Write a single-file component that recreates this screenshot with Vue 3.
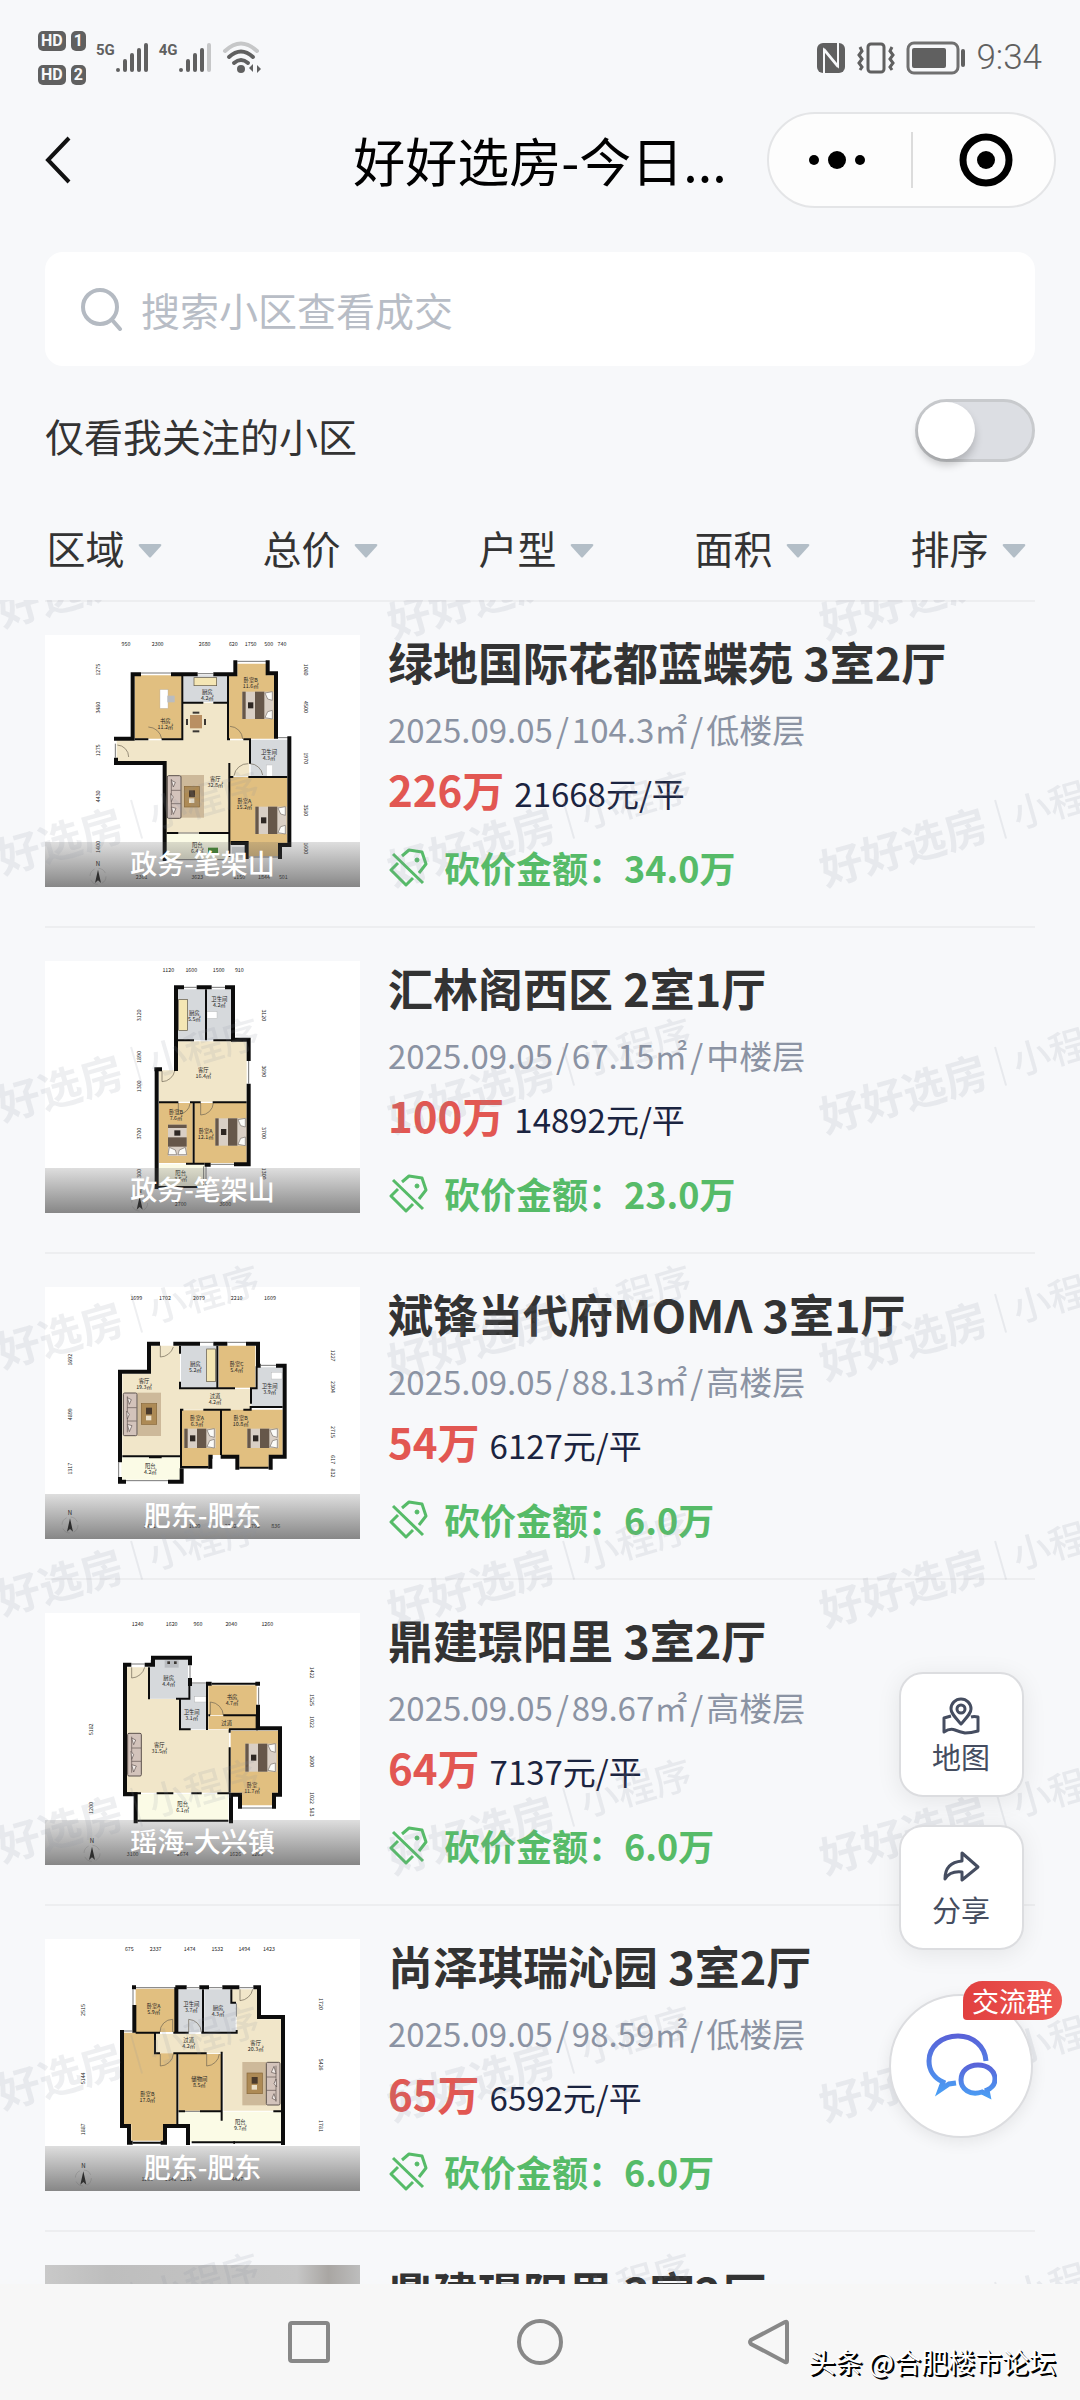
<script setup>
import { ref } from 'vue'

const keyword = ref('')
const onlyFollowed = ref(false)
const filters = ['区域', '总价', '户型', '面积', '排序']

const listings = [
  { id: 1, name: '绿地国际花都蓝蝶苑', layout: '3室2厅', area: '104.3', floor: '低楼层', total: '226', unit: '21668', cut: '34.0', district: '政务-笔架山', plan: 0 },
  { id: 2, name: '汇林阁西区', layout: '2室1厅', area: '67.15', floor: '中楼层', total: '100', unit: '14892', cut: '23.0', district: '政务-笔架山', plan: 1 },
  { id: 3, name: '斌锋当代府MOMΛ', layout: '3室1厅', area: '88.13', floor: '高楼层', total: '54', unit: '6127', cut: '6.0', district: '肥东-肥东', plan: 2 },
  { id: 4, name: '鼎建璟阳里', layout: '3室2厅', area: '89.67', floor: '高楼层', total: '64', unit: '7137', cut: '6.0', district: '瑶海-大兴镇', plan: 3 },
  { id: 5, name: '尚泽琪瑞沁园', layout: '3室2厅', area: '98.59', floor: '低楼层', total: '65', unit: '6592', cut: '6.0', district: '肥东-肥东', plan: 4 },
  { id: 6, name: '鼎建璟阳里', layout: '3室2厅', area: '89.67', floor: '高楼层', total: '64', unit: '7137', cut: '6.0', district: '瑶海-大兴镇', plan: null },
]

// floor plans: filled rooms, thick outer walls, thin inner walls, door arcs, furniture and labels
const plans = [
  {
    box: '45 44 945 756',
    rooms: [
      ['hall', 'M460 247H592V360H658V468H597V640H408V428H260V360H460Z'],
      ['wood', 'M314 165H457V355H314Z'],
      ['wood', 'M597 165H622V130H712V165H733V355H597Z'],
      ['wood', 'M600 470H772V672H748V708H655V672H600Z'],
      ['tile', 'M460 165H592V245H460Z'],
      ['tile', 'M662 358H774V468H662Z'],
      ['tile', 'M606 680H648V712H606Z'],
      ['deck', 'M408 640H598V716H408Z'],
    ],
    thick: 'M252 355H314M308 355V162H333M423 162H503M550 162H616V120M713 120V159H738V355M778 348V674H750V716M258 412V428H404V722M602 668H650V716',
    thin: 'M314 357H355M395 357H457V165M457 247H520M550 247H592M594 165V357H600M640 357H660V430M600 470H610M655 470H772M598 428V710M410 638H445M507 638H595',
    lines: 'M333 158H423M503 160H550M622 123H712M742 352H774M256 370V412M415 718H590M655 710H748M445 638H507',
    doors: 'M355 320A42 42 0 0 1 395 355M262 374A36 36 0 0 1 296 410M600 318A40 40 0 0 1 638 356M612 466A42 42 0 0 1 655 430M660 430A40 40 0 0 1 698 464',
    beds: [[637, 214, 0, 82], [676, 559, 0, 82]],
    sofas: [[412, 466, 0]],
    rugs: [[452, 464, 70, 128]],
    tables: [[463, 498]],
    extras: [['white', 390, 208, 24, 56], ['grey', 412, 226, 22, 20], ['cream', 492, 172, 68, 24], ['white', 709, 434, 19, 34], ['brown', 480, 284, 36, 40], ['dark', 488, 274, 20, 6], ['dark', 488, 330, 20, 6], ['dark', 468, 296, 6, 18], ['dark', 522, 296, 6, 18], ['green', 534, 682, 30, 18]],
    labels: [['书房', 406, 303], ['11.2㎡', 406, 321], ['厨房', 532, 216], ['4.2㎡', 532, 234], ['卧室B', 662, 180], ['11.6㎡', 662, 198], ['客厅', 556, 476], ['32.8㎡', 556, 494], ['卫生间', 717, 394], ['4.3㎡', 717, 412], ['卧室A', 643, 542], ['15.2㎡', 643, 560], ['阳台', 502, 674], ['6.4㎡', 502, 692]],
    top: [['950', 288], ['2300', 383], ['2680', 524], ['620', 610], ['1750', 662], ['500', 716], ['740', 756]],
    topY: 72,
    bottom: [['2361', 335], ['3623', 502], ['1150', 628], ['1844', 702], ['501', 760]],
    bottomY: 770,
    left: [['1275', 148], ['3480', 262], ['1275', 390], ['4430', 528], ['1400', 680]],
    leftX: 203,
    right: [['1080', 148], ['4500', 260], ['1970', 414], ['3580', 570], ['1600', 684]],
    rightX: 829,
    north: [204, 768],
  },
  {
    box: '45 62 945 756',
    rooms: [
      ['tile', 'M443 147H525V300H443Z'],
      ['tile', 'M531 147H605V300H531Z'],
      ['hall', 'M443 303H650V484H387V390H443Z'],
      ['wood', 'M387 488H488V668H387Z'],
      ['wood', 'M493 488H650V668H493Z'],
      ['deck', 'M387 672H524V738H387Z'],
    ],
    thick: 'M462 141H438V392M500 141H545M585 141H609V298H656V362M656 430V672H612M373 387H396M380 387V746M524 673H542',
    thin: 'M528 147V300M443 300H492M550 300H605M387 486H445M480 486H512M548 486H650M491 486V668M468 670H524M380 740H524',
    lines: 'M462 141H500M545 141H585M656 362V430M542 672H612M521 678V740M528 678V740',
    doors: 'M396 392V424A40 40 0 0 0 434 392M445 488V522A36 36 0 0 0 480 490M512 488V524A38 38 0 0 0 550 488',
    beds: [[556, 534, 0, 82], [470, 553, 90, 56]],
    sofas: [],
    rugs: [],
    tables: [],
    extras: [['cream', 446, 178, 26, 92], ['white', 531, 214, 30, 20]],
    labels: [['厨房', 493, 218], ['5.5㎡', 493, 236], ['卫生间', 568, 176], ['4.2㎡', 568, 194], ['客厅', 520, 390], ['16.4㎡', 520, 408], ['卧室B', 438, 515], ['7.6㎡', 438, 533], ['卧室A', 527, 573], ['12.1㎡', 527, 591], ['阳台', 452, 698], ['3.5㎡', 452, 716]],
    top: [['1120', 415], ['1600', 484], ['1500', 566], ['910', 628]],
    topY: 90,
    bottom: [['2700', 452], ['3600', 586]],
    bottomY: 790,
    left: [['3120', 225], ['1890', 350], ['1300', 438], ['3700', 580], ['1300', 704]],
    leftX: 328,
    right: [['3120', 225], ['3690', 393], ['3700', 578], ['1300', 700]],
    rightX: 703,
    north: [329, 788],
  },
  {
    box: '45 52 945 756',
    rooms: [
      ['hall', 'M362 228H450V358H662V420H450V558H277V312H362Z'],
      ['tile', 'M453 228H560V352H453Z'],
      ['wood', 'M566 228H676V354H566Z'],
      ['tile', 'M684 293H758V410H664V358H684Z'],
      ['wood', 'M456 422H570V556H536V590H456Z'],
      ['wood', 'M576 420H758V556H716V592H628V556H576Z'],
      ['deck', 'M274 563H452V630H274Z'],
    ],
    thick: 'M390 222H357V306H270V578M430 222H510M550 222H592M648 222H684V288H692M738 288H764V561H722V600M622 600V561H572M548 561H541V597M270 622V636H288M414 636H455V596',
    thin: 'M450 228V252M450 336V356H615M562 228V354M660 356H680V290M663 356V402M450 420H460M520 420H602M640 420H662V412H758M453 420V596M573 420V556M277 560H315M357 563H395M277 560H452M455 592H536M628 594H716',
    lines: 'M510 218H550M592 218H648M692 287H738M266 578V622M288 633H414M460 596H540',
    doors: 'M391 228V262A42 42 0 0 0 430 232',
    beds: [[463, 477, 0, 58], [652, 477, 0, 58]],
    sofas: [[280, 370, 0]],
    rugs: [[322, 369, 71, 130]],
    tables: [[334, 402]],
    extras: [['cream', 530, 238, 26, 98], ['white', 724, 308, 32, 20]],
    labels: [['客厅', 342, 334], ['19.3㎡', 342, 352], ['厨房', 496, 282], ['5.2㎡', 496, 300], ['卧室C', 620, 282], ['5.4㎡', 620, 300], ['过道', 555, 379], ['4.2㎡', 555, 397], ['卫生间', 719, 350], ['3.9㎡', 719, 368], ['卧室A', 501, 444], ['6.3㎡', 501, 462], ['卧室B', 632, 444], ['10.8㎡', 632, 462], ['阳台', 361, 588], ['4.2㎡', 361, 606]],
    top: [['1699', 319], ['1702', 405], ['2079', 507], ['2210', 620], ['1609', 720]],
    topY: 85,
    bottom: [['3401', 360], ['1609', 494], ['2202', 602], ['1792', 672], ['836', 737]],
    bottomY: 769,
    left: [['1692', 270], ['4899', 434], ['1317', 597]],
    leftX: 119,
    right: [['1227', 258], ['2304', 352], ['2715', 487], ['617', 570], ['832', 610]],
    rightX: 910,
    north: [120, 766],
  },
  {
    box: '45 67 945 756',
    rooms: [
      ['hall', 'M291 230H357V324H450V418H597V606H291Z'],
      ['tile', 'M360 208H474V324H360Z'],
      ['tile', 'M453 326H480V280H530V416H453Z'],
      ['wood', 'M535 284H680V374H535Z'],
      ['wood', 'M535 376H678V416H535Z'],
      ['wood', 'M602 420H744V606H726V644H636V606H602Z'],
      ['deck', 'M322 610H595V688H322Z'],
    ],
    thick: 'M304 222H285V611H317V698M344 222H369V201H480V224M480 262V280H486M684 342V413H750V612H732V654M603 698V612H630V654M528 279H545M676 279H690',
    thin: 'M357 230V326M438 324H450V416H482M450 324H478V280M531 280V418M535 374H540M580 374H680V416M597 416H684M599 416V426M599 470V606M291 608H333M380 608H430M484 608H515M562 608H597M322 690H595M545 279H680',
    lines: 'M304 220H344M480 224V262M486 277H528M686 290V342M636 652H726',
    doors: 'M305 230V262A42 42 0 0 0 344 230M541 374V334A42 42 0 0 1 580 374',
    beds: [[646, 459, 0, 84]],
    sofas: [[293, 428, 0]],
    rugs: [],
    tables: [],
    extras: [['grey', 404, 209, 42, 22], ['dark', 412, 212, 8, 8], ['dark', 432, 212, 8, 8], ['white', 494, 318, 34, 16]],
    labels: [['厨房', 416, 262], ['4.4㎡', 416, 280], ['书房', 606, 320], ['4.7㎡', 606, 338], ['过道', 590, 398], ['卫生间', 485, 363], ['3.1㎡', 485, 381], ['客厅', 388, 462], ['31.5㎡', 388, 480], ['卧室', 666, 583], ['11.7㎡', 666, 601], ['阳台', 458, 641], ['6.1㎡', 458, 659]],
    top: [['1240', 323], ['1620', 425], ['960', 504], ['2040', 604], ['1260', 712]],
    topY: 100,
    bottom: [['3100', 308], ['2674', 458], ['1626', 616], ['1260', 682]],
    bottomY: 790,
    left: [['5182', 416], ['1200', 652]],
    leftX: 184,
    right: [['1422', 246], ['1525', 328], ['1022', 394], ['2600', 512], ['1022', 622], ['583', 664]],
    rightX: 847,
    north: [186, 788],
  },
  {
    box: '45 57 945 756',
    rooms: [
      ['hall', 'M605 208H682V298H754V572H580V400H377V342H620V248H605Z'],
      ['wood', 'M317 206H436V336H317Z'],
      ['tile', 'M443 208H516V336H443Z'],
      ['tile', 'M523 208H602V248H617V336H523Z'],
      ['wood', 'M282 338H374V400H440V613H400V662H304V613H282Z'],
      ['wood', 'M446 402H574V572H446Z'],
      ['deck', 'M446 575H754V666H480V613H446Z'],
    ],
    thick: 'M306 202H318M436 202H470M508 202H537M577 202H628M670 202H687V291H759V675M313 255V338M276 330V618H297V666M405 666V618H474V675M439 202V338M291 668H308M392 668H411',
    thin: 'M317 338H390M430 338H476M514 338H620V330M519 208V338M604 208V248H618M375 340V400H390M430 400H530M575 395V602M442 400V613M446 574H465M510 574H575M730 574H754M485 667H754M308 668H400',
    lines: 'M318 203H436M309 208V255M470 203H508M537 203H577M282 333H306M619 250V290M628 203H670M465 574H510',
    doors: 'M390 336A38 38 0 0 1 428 298V336M476 336V298A40 40 0 0 1 514 336M630 208V242A42 42 0 0 0 668 208M391 402V438A40 40 0 0 0 430 402M530 402V438A40 40 0 0 0 568 402',
    beds: [],
    sofas: [[750, 555, 180]],
    rugs: [[637, 426, 71, 130]],
    tables: [[651, 459]],
    extras: [['dark', 610, 663, 5, 9]],
    labels: [['卧室A', 371, 257], ['5.9㎡', 371, 275], ['卫生间', 484, 253], ['3.7㎡', 484, 271], ['厨房', 564, 265], ['4.3㎡', 564, 283], ['过道', 476, 360], ['4.2㎡', 476, 378], ['客厅', 677, 370], ['20.3㎡', 677, 388], ['储物间', 508, 478], ['8.5㎡', 508, 496], ['卧室B', 352, 522], ['17.0㎡', 352, 540], ['阳台', 631, 607], ['9.7㎡', 631, 625]],
    top: [['675', 298], ['2337', 377], ['1474', 479], ['1532', 562], ['1494', 643], ['1423', 717]],
    topY: 87,
    bottom: [['1200', 352], ['1541', 422], ['1251', 468], ['4437', 622]],
    bottomY: 777,
    left: [['2515', 270], ['5144', 475], ['1887', 628]],
    leftX: 160,
    right: [['1720', 252], ['5426', 434], ['1781', 618]],
    rightX: 872,
    north: [160, 774],
  },
]
</script>

<template>
  <div class="page">
    <header>
      <div class="status">
        <div class="status-side">
          <div class="hd-group">
            <div class="hd-row"><span class="hd">HD</span><span class="hd">1</span></div>
            <div class="hd-row"><span class="hd">HD</span><span class="hd">2</span></div>
          </div>
          <div v-for="net in ['5G', '4G']" :key="net" class="signal">
            <span class="net">{{ net }}</span>
            <svg width="34" height="32" viewBox="0 0 34 32">
              <g stroke="#606060" stroke-width="4" stroke-linecap="round">
                <path d="M3 28v0M10 19v9M17 13v15M24 8v20" />
                <path d="M31 3v25" :stroke="net === '4G' ? '#c6c7c8' : '#606060'" />
              </g>
            </svg>
          </div>
          <svg width="40" height="34" viewBox="0 0 40 34" fill="none" stroke-linecap="round">
            <path d="M3 10Q19 -5 35 10" stroke="#c6c7c8" stroke-width="4" />
            <path d="M7 16Q19 5 31 16M12 22Q19 16 26 22" stroke="#606060" stroke-width="4" />
            <circle cx="19" cy="28" r="4" fill="#606060" />
            <path d="M31 23v8l-4-4zM35 32v-8l4 4z" fill="#606060" />
          </svg>
        </div>
        <div class="status-side">
          <svg width="30" height="32" viewBox="0 0 30 32">
            <rect x="1" y="1" width="28" height="30" rx="6" fill="#606060" />
            <path d="M8 31V8l14 17M22 1v23L8 7" fill="none" stroke="#f7f8fa" stroke-width="2" />
          </svg>
          <svg width="40" height="32" viewBox="0 0 40 32" fill="none" stroke="#606060" stroke-width="3">
            <rect x="12" y="2" width="16" height="28" rx="3" />
            <path d="M4 5l2 4-3 4 3 4-3 4 3 4-2 3M36 5l-2 4 3 4-3 4 3 4-3 4 2 3" />
          </svg>
          <svg width="60" height="34" viewBox="0 0 60 34">
            <rect x="2" y="2" width="50" height="30" rx="6" fill="none" stroke="#707070" stroke-width="3" />
            <rect x="6" y="7" width="34" height="20" rx="2" fill="#606060" />
            <path d="M57 10v14" stroke="#606060" stroke-width="4" stroke-linecap="round" />
          </svg>
          <span class="time">9:34</span>
        </div>
      </div>

      <div class="titlebar">
        <button class="back" aria-label="返回">
          <svg width="28" height="48" viewBox="0 0 28 48" fill="none" stroke="#111" stroke-width="4">
            <path d="M25 2L4 24l21 22" />
          </svg>
        </button>
        <h1>好好选房-今日...</h1>
        <div class="capsule">
          <button aria-label="更多">
            <svg width="60" height="56" viewBox="0 0 60 56">
              <circle cx="7" cy="28" r="5" /><circle cx="30" cy="28" r="9" /><circle cx="53" cy="28" r="5" />
            </svg>
          </button>
          <button aria-label="关闭">
            <svg width="56" height="56" viewBox="0 0 56 56">
              <circle cx="28" cy="28" r="23" fill="none" stroke="#000" stroke-width="7" />
              <circle cx="28" cy="28" r="9" />
            </svg>
          </button>
        </div>
      </div>

      <label class="search">
        <svg width="44" height="44" viewBox="0 0 44 44" fill="none" stroke="#b4bac2" stroke-width="4" stroke-linecap="round">
          <circle cx="19" cy="20" r="17" />
          <path d="M32 34l7 8" />
        </svg>
        <input v-model="keyword" type="text" placeholder="搜索小区查看成交" aria-label="搜索小区查看成交" />
      </label>

      <div class="follow">
        <label for="followed">仅看我关注的小区</label>
        <input id="followed" v-model="onlyFollowed" type="checkbox" role="switch" />
      </div>

      <div class="filters">
        <label v-for="name in filters" :key="name" class="filter">
          <select :aria-label="name">
            <option>{{ name }}</option>
          </select>
          <svg width="24" height="16" viewBox="0 0 24 16"><path d="M2 1h20q2 0 1 2L13 14q-1 1-2 0L1 3Q0 1 2 1z" fill="#b3bec7" /></svg>
        </label>
      </div>
    </header>

    <div class="body">
      <ul class="list">
        <li v-for="item in listings" :key="item.id" class="item">
          <div class="thumb" :class="{ photo: item.plan === null }">
            <svg v-if="item.plan !== null" class="plan" :viewBox="plans[item.plan].box">
              <path v-for="(room, i) in plans[item.plan].rooms" :key="i" :d="room[1]" :class="room[0]" />
              <rect v-for="(r, i) in plans[item.plan].rugs" :key="'r' + i" :x="r[0]" :y="r[1]" :width="r[2]" :height="r[3]" fill="#cdb99a" />
              <rect v-for="(e, i) in plans[item.plan].extras" :key="'e' + i" :x="e[1]" :y="e[2]" :width="e[3]" :height="e[4]" :class="e[0]" />
              <g v-for="(t, i) in plans[item.plan].tables" :key="'t' + i" :transform="`translate(${t[0]} ${t[1]})`">
                <rect width="46" height="62" fill="#ad8a55" stroke="#866638" stroke-width="2" />
                <rect x="14" y="12" width="18" height="20" fill="#4a3a2b" />
                <rect x="14" y="36" width="16" height="14" fill="#eadfc8" />
              </g>
              <g v-for="(s, i) in plans[item.plan].sofas" :key="'s' + i" :transform="`translate(${s[0]} ${s[1]}) rotate(${s[2]})`">
                <rect width="41" height="128" rx="4" fill="#d3c3bb" stroke="#5d524e" stroke-width="3" />
                <path d="M12 10V118M12 44H40M12 84H40" stroke="#5d524e" stroke-width="2" />
                <path d="M12 14l12 6-6 14zM12 94l14 4-8 18zM10 54l8 10-6 14z" fill="#f2ece8" stroke="#5d524e" stroke-width="2" />
              </g>
              <g v-for="(b, i) in plans[item.plan].beds" :key="'b' + i" :transform="`translate(${b[0]} ${b[1]}) rotate(${b[2]})`">
                <rect width="94" :height="b[3]" fill="#d9cfc5" />
                <rect width="10" :height="b[3]" fill="#66574a" />
                <rect x="38" width="28" :height="b[3]" fill="#66574a" />
                <rect x="17" :y="b[3] / 2 - 9" width="16" height="18" fill="#2e2723" />
                <path :d="`M68 4l22-4v26l-14-4zM68 ${b[3] - 4}l22 4v-26l-14 4z`" fill="#fbfbf8" stroke="#77706a" stroke-width="2" />
              </g>
              <path :d="plans[item.plan].lines" class="window" />
              <path :d="plans[item.plan].doors" class="door" />
              <path :d="plans[item.plan].thin" class="inner-wall" />
              <path :d="plans[item.plan].thick" class="outer-wall" />
              <g class="plan-text">
                <text v-for="(l, i) in plans[item.plan].labels" :key="'l' + i" :x="l[1]" :y="l[2] + 6">{{ l[0] }}</text>
                <text v-for="(d, i) in plans[item.plan].top" :key="'a' + i" :x="d[1]" :y="plans[item.plan].topY + 6">{{ d[0] }}</text>
                <text v-for="(d, i) in plans[item.plan].bottom" :key="'c' + i" :x="d[1]" :y="plans[item.plan].bottomY + 6">{{ d[0] }}</text>
                <text v-for="(d, i) in plans[item.plan].left" :key="'d' + i" :transform="`translate(${plans[item.plan].leftX + 6} ${d[1]}) rotate(-90)`">{{ d[0] }}</text>
                <text v-for="(d, i) in plans[item.plan].right" :key="'f' + i" :transform="`translate(${plans[item.plan].rightX - 6} ${d[1]}) rotate(90)`">{{ d[0] }}</text>
              </g>
              <g :transform="`translate(${plans[item.plan].north[0]} ${plans[item.plan].north[1]})`">
                <circle r="24" fill="none" stroke="#999" stroke-width="1" stroke-dasharray="26 12" />
                <path d="M0 -20L9 20L0 12L-9 20Z" fill="#111" />
                <text y="-30" class="north">N</text>
              </g>
            </svg>
            <div v-if="item.plan !== null" class="caption">{{ item.district }}</div>
          </div>
          <div class="info">
            <h2>{{ item.name }} {{ item.layout }}</h2>
            <p class="meta">2025.09.05<i>/</i>{{ item.area }}㎡<i>/</i>{{ item.floor }}</p>
            <p class="price"><strong>{{ item.total }}万</strong><span>{{ item.unit }}元/平</span></p>
            <p class="cut">
              <svg width="40" height="40" viewBox="0 0 40 40" fill="none" stroke="#56bb68" stroke-width="3" stroke-linejoin="round">
                <path d="M5 7L35 36" />
                <path d="M14 9L21 3L34 5L38 17L31 26" />
                <path d="M10 16L3 23L18 38L25 31" />
                <circle cx="29" cy="13" r="2" fill="#56bb68" stroke-width="1" />
              </svg>
              <span>砍价金额：{{ item.cut }}万</span>
            </p>
          </div>
        </li>
      </ul>

      <svg class="watermark" aria-hidden="true">
        <defs>
          <pattern id="wm" x="-54" y="115" width="432" height="247" patternUnits="userSpaceOnUse">
            <g transform="translate(31 150) rotate(-16)" fill="#8a909c" fill-opacity="0.14">
              <text x="-21" y="16" font-size="43" font-weight="700">好好选房</text>
              <rect x="165" y="-20" width="2" height="40" />
              <text x="179" y="14" font-size="38" font-weight="500">小程序</text>
            </g>
          </pattern>
        </defs>
        <rect width="100%" height="100%" fill="url(#wm)" />
      </svg>

      <div class="floats">
        <button class="tile-btn">
          <svg width="40" height="40" viewBox="0 0 40 40" fill="none" stroke="#454d60" stroke-width="3" stroke-linejoin="round">
            <path d="M20 28C13 20 10 17 10 13a10 10 0 0 1 20 0c0 4-3 7-10 15z" />
            <circle cx="20" cy="13" r="4" />
            <path d="M10 20L3 22V36Q9 32 14 34T24 37Q30 37 37 35V21Q33 20 30 21" />
          </svg>
          <span>地图</span>
        </button>
        <button class="tile-btn">
          <svg width="40" height="40" viewBox="0 0 40 40" fill="none" stroke="#454d60" stroke-width="3" stroke-linejoin="round">
            <path d="M21 4L37 18L21 31V23C12 22 7 25 4 30C4 19 9 13 21 12Z" />
          </svg>
          <span>分享</span>
        </button>
        <button class="chat">
          <svg width="72" height="68" viewBox="0 0 72 68" fill="none" stroke="url(#chatFill)" stroke-width="5">
            <defs>
              <linearGradient id="chatFill" x1="0" y1="0" x2="0" y2="64" gradientUnits="userSpaceOnUse">
                <stop offset="0" stop-color="#5a5fd6" />
                <stop offset="1" stop-color="#4aa0f5" />
              </linearGradient>
              <linearGradient id="bubbleFill" x1="0" y1="30" x2="0" y2="66" gradientUnits="userSpaceOnUse">
                <stop offset="0" stop-color="#5a5fd6" />
                <stop offset="1" stop-color="#4aa0f5" />
              </linearGradient>
            </defs>
            <path d="M61 29C60 14 48 4 33 4C16 4 4 15 4 29C4 38 9 46 18 50L15 58L24 52L31 51" />
            <path stroke="url(#bubbleFill)" d="M62 58L63 63L57 60C45 64 36 57 36 48C36 39 43 33 53 33C63 33 70 39 70 47C70 52 67 56 62 58Z" />
          </svg>
          <span class="badge">交流群</span>
        </button>
      </div>
    </div>

    <nav class="navbar">
      <button aria-label="最近任务">
        <svg width="50" height="50" viewBox="0 0 50 50"><rect x="5" y="6" width="38" height="38" rx="2" /></svg>
      </button>
      <button aria-label="主屏幕">
        <svg width="50" height="50" viewBox="0 0 50 50"><circle cx="25" cy="25" r="21" /></svg>
      </button>
      <button aria-label="返回上一页">
        <svg width="50" height="50" viewBox="0 0 50 50"><path d="M42 6V44Q42 46 40 45L6 27Q4 25 6 23L40 5Q42 4 42 6Z" /></svg>
      </button>
      <span class="credit">头条 @合肥楼市论坛</span>
    </nav>
  </div>
</template>

<style>
body {
  background: #f7f8fa;
}
</style>

<style scoped>
.page {
  display: flex;
  flex-direction: column;
  height: 100vh;
  background: #f7f8fa;
  color: #333;
  font-family: "Noto Sans CJK SC", "Noto Sans", sans-serif;
}
button, input, select {
  font: inherit;
  color: inherit;
  border: 0;
  padding: 0;
  margin: 0;
  background: none;
}
h1, h2, p, ul {
  margin: 0;
  padding: 0;
}
svg {
  display: block;
  flex: none;
}

/* status bar */
.status {
  display: flex;
  justify-content: space-between;
  align-items: center;
  height: 54px;
  padding: 31px 38px 0;
  color: #606060;
  font-family: Roboto, sans-serif;
}
.status-side {
  display: flex;
  align-items: center;
  gap: 10px;
}
.hd-group {
  display: flex;
  flex-direction: column;
  gap: 14px;
}
.hd-row {
  display: flex;
  gap: 5px;
}
.hd {
  padding: 0 3px;
  border-radius: 5px;
  background: #606060;
  color: #f7f8fa;
  font-size: 16px;
  font-weight: 700;
  line-height: 20px;
}
.signal {
  display: flex;
  align-items: flex-start;
}
.net {
  font-size: 15px;
  font-weight: 700;
  line-height: 16px;
}
.time {
  font-size: 35px;
  font-weight: 300;
  line-height: 40px;
}

/* title bar */
.titlebar {
  display: grid;
  grid-template-columns: 1fr auto 1fr;
  align-items: center;
  margin-top: 27px;
  padding: 0 24px;
}
.back {
  justify-self: start;
  padding: 0 20px;
}
h1 {
  color: #000;
  font-size: 52px;
  font-weight: 400;
  line-height: 72px;
  white-space: nowrap;
}
.capsule {
  justify-self: end;
  display: flex;
  align-items: center;
  box-sizing: border-box;
  width: 289px;
  height: 96px;
  border: 2px solid #e4e5e7;
  border-radius: 48px;
  background: #fdfdfd;
}
.capsule button {
  flex: 1;
  display: flex;
  justify-content: center;
  padding-right: 5px;
}
.capsule button + button {
  padding: 0 0 0 5px;
  border-left: 2px solid #dcdcdc;
}

.search {
  display: flex;
  align-items: center;
  gap: 16px;
  height: 114px;
  margin: 44px 45px 0;
  padding: 0 36px;
  border-radius: 18px;
  background: #fff;
}
.search input {
  flex: 1;
  min-width: 0;
  outline: none;
  font-size: 39px;
}
.search input::placeholder {
  color: #b8bdc6;
}

.follow {
  display: flex;
  justify-content: space-between;
  align-items: flex-end;
  margin: 33px 45px 0;
  font-size: 39px;
  line-height: 54px;
}
.follow input {
  appearance: none;
  box-sizing: border-box;
  width: 120px;
  height: 63px;
  border: 3px solid #c8cacd;
  border-radius: 32px;
  background: #dcdee3;
}
.follow input::before {
  content: "";
  display: block;
  width: 57px;
  height: 57px;
  border-radius: 50%;
  background: #fff;
  box-shadow: 0 6px 8px rgba(0, 0, 0, .2);
}
.follow input:checked {
  background: #56bb68;
}
.follow input:checked::before {
  margin-left: auto;
}

.filters {
  display: grid;
  grid-template-columns: repeat(5, 1fr);
  height: 98px;
  margin-top: 36px;
  padding-bottom: 4px;
}
.filter {
  display: flex;
  align-items: center;
  justify-content: center;
  gap: 12px;
  padding-right: 8px;
}
.filter select {
  appearance: none;
  font-size: 39px;
}
.filter svg {
  margin-top: 8px;
}

/* listings */
.body {
  position: relative;
  flex: 1;
  min-height: 0;
  overflow: hidden;
}
.list {
  height: 100%;
  overflow-y: auto;
  scrollbar-width: none;
  list-style: none;
}
.item {
  display: flex;
  gap: 28px;
  margin: 0 45px;
  padding: 33px 0 35px;
  border-top: 2px solid #edeef0;
}
.thumb {
  position: relative;
  flex: none;
  width: 315px;
  height: 252px;
  background: #fff;
}
.photo {
  background: linear-gradient(90deg, #c9c9c9, #bebebe 20%, #c6c6c6 80%, #a9a6a3 90%, #bdbdbd);
}
.caption {
  position: absolute;
  left: 0;
  right: 0;
  bottom: 0;
  padding-bottom: 3px;
  background: linear-gradient(rgba(90, 90, 90, .2), rgba(70, 70, 70, .65));
  color: #fff;
  font-size: 27px;
  font-weight: 500;
  line-height: 42px;
  text-align: center;
}
.info {
  min-width: 0;
}
h2 {
  font-size: 45px;
  font-weight: 700;
  line-height: 54px;
  white-space: nowrap;
}
.meta {
  margin-top: 16px;
  color: #8b93a3;
  font-size: 33px;
  line-height: 48px;
}
.meta i {
  padding: 0 3px;
  font-style: normal;
}
.price {
  display: flex;
  align-items: baseline;
  gap: 10px;
  height: 52px;
  margin-top: 12px;
  color: #1b2440;
  font-size: 33px;
  line-height: 48px;
}
.price strong {
  color: #e25752;
  font-size: 42px;
}
.cut {
  display: flex;
  align-items: center;
  gap: 16px;
  margin-top: 26px;
  color: #56bb68;
  font-size: 36px;
  font-weight: 700;
  line-height: 48px;
}

/* floor plans */
.plan {
  width: 100%;
  height: 100%;
}
.hall { fill: #f1e6c9; }
.wood { fill: #e1bf80; }
.tile { fill: #d6d9dc; }
.deck { fill: #fbfbe6; }
.white { fill: #fff; stroke: #aaa; }
.grey { fill: #b9bcc0; }
.cream { fill: #f4e6b4; stroke: #5c5340; stroke-width: 2px; }
.brown { fill: #b98f62; }
.dark { fill: #3b3733; }
.green { fill: #3f8a2c; }
.outer-wall {
  fill: none;
  stroke: #0c0c0c;
  stroke-width: 12px;
}
.inner-wall {
  fill: none;
  stroke: #0c0c0c;
  stroke-width: 6px;
}
.window {
  fill: none;
  stroke: #777;
  stroke-width: 3px;
}
.door {
  fill: none;
  stroke: #6b6252;
  stroke-width: 2px;
}
.plan-text {
  fill: #222;
  font-size: 16px;
  text-anchor: middle;
}
.north {
  font-size: 18px;
  text-anchor: middle;
}

.watermark {
  position: absolute;
  top: 0;
  left: 0;
  width: 100%;
  height: 100%;
  pointer-events: none;
}

/* floating buttons */
.floats {
  position: absolute;
  right: 47px;
  bottom: 146px;
  display: flex;
  flex-direction: column;
  align-items: center;
  gap: 28px;
}
.tile-btn {
  display: flex;
  flex-direction: column;
  align-items: center;
  gap: 2px;
  box-sizing: border-box;
  width: 125px;
  height: 125px;
  padding-top: 22px;
  border: 2px solid #dcdde0;
  border-radius: 24px;
  background: #fff;
  box-shadow: 0 4px 24px rgba(0, 0, 0, .08);
  color: #454d60;
  font-size: 29px;
  line-height: 36px;
}
.chat {
  position: relative;
  display: flex;
  align-items: center;
  justify-content: center;
  box-sizing: border-box;
  width: 144px;
  height: 144px;
  margin-top: 16px;
  border: 2px solid #dcdde0;
  border-radius: 50%;
  background: #fff;
  box-shadow: 0 4px 16px rgba(0, 0, 0, .08);
}
.badge {
  position: absolute;
  left: 72px;
  top: -15px;
  padding: 0 9px;
  border-radius: 20px 20px 20px 4px;
  background: linear-gradient(90deg, #e13f3f, #ee5a54);
  color: #fff;
  font-size: 27px;
  line-height: 39px;
  white-space: nowrap;
}

/* system navigation */
.navbar {
  position: relative;
  display: flex;
  align-items: center;
  justify-content: center;
  gap: 180px;
  height: 116px;
  background: #f7f7f7;
}
.navbar svg {
  fill: none;
  stroke: #888;
  stroke-width: 4px;
}
.credit {
  position: absolute;
  right: 24px;
  bottom: 20px;
  color: #fff;
  font-size: 27px;
  line-height: 36px;
  text-shadow: 1px 1px 0 #000, 2px 2px 0 #000;
}
</style>
